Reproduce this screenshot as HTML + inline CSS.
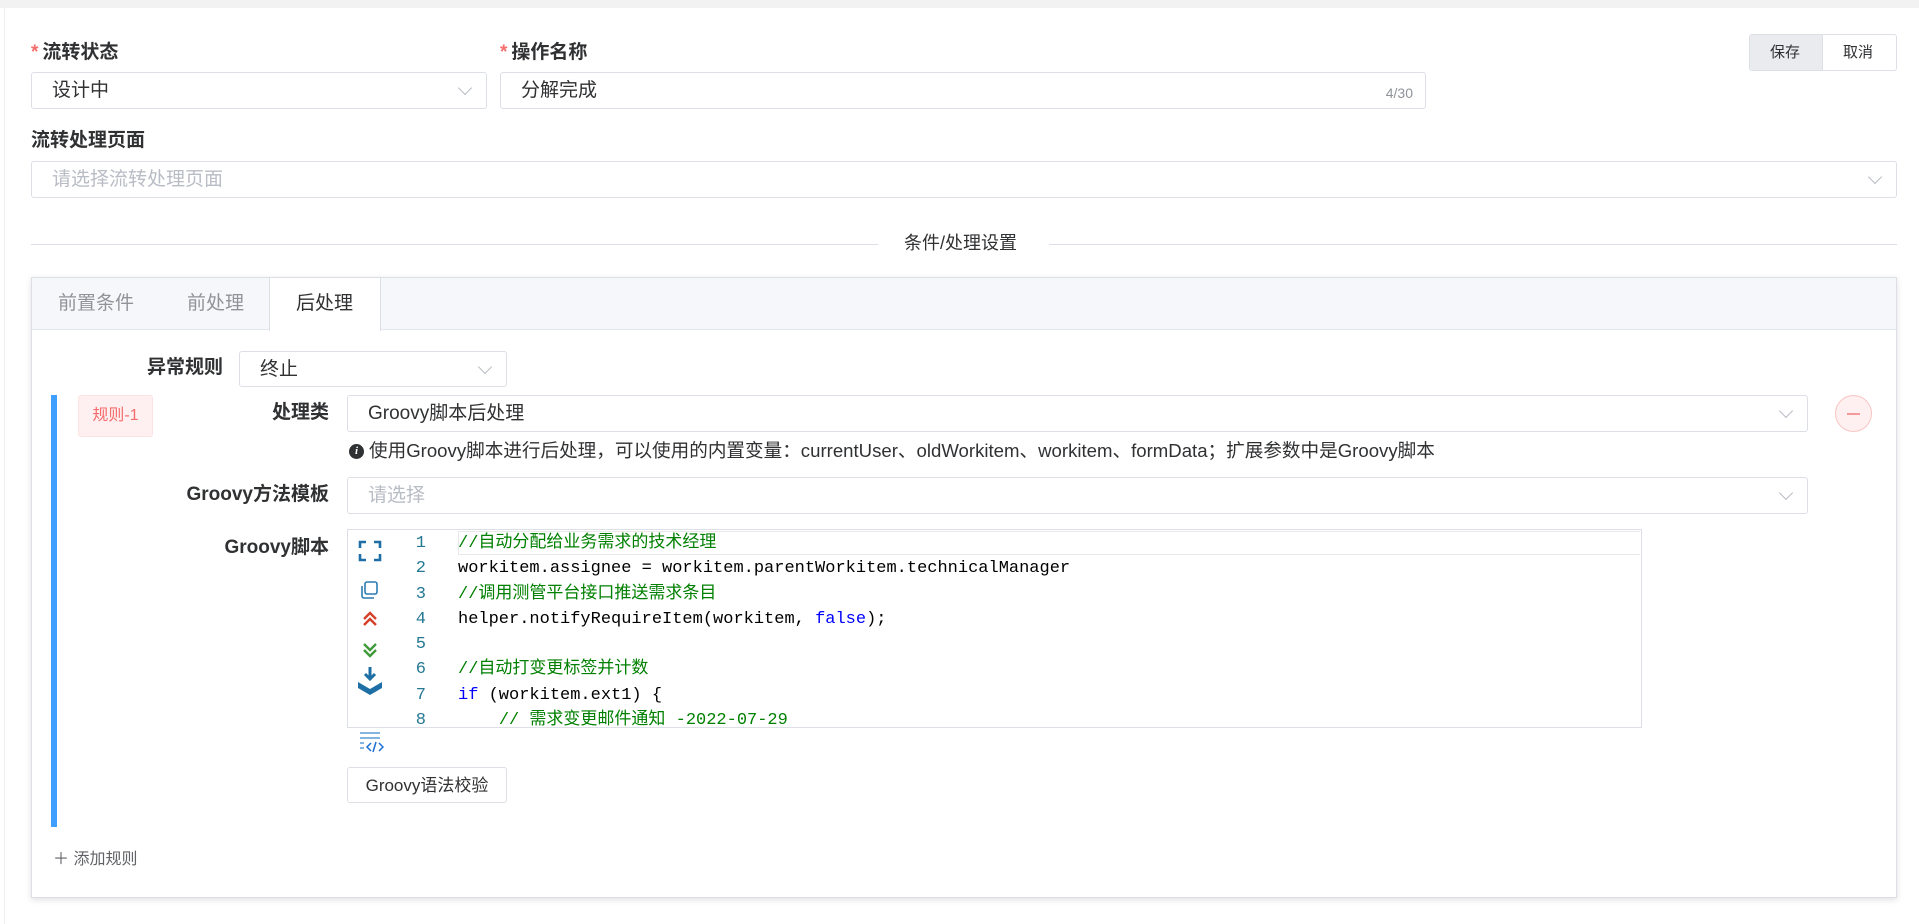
<!DOCTYPE html>
<html><head><meta charset="utf-8"><style>
*{box-sizing:border-box;margin:0;padding:0}
body{width:1919px;height:924px;background:#fff;font-family:"Liberation Sans","Noto Sans CJK SC",sans-serif;color:#303133;position:relative;overflow:hidden;font-size:19px}
.a{position:absolute}
.box{position:absolute;border:1px solid #dcdfe6;border-radius:3px;background:#fff}
.lbl{position:absolute;font-weight:bold;font-size:19px;color:#303133;line-height:22px}
.rl{text-align:right;width:300px}
.star{color:#f56c6c;margin-right:4px}
.chev{position:absolute;width:10px;height:10px;border-right:1.5px solid #b8bcc4;border-bottom:1.5px solid #b8bcc4;transform:rotate(45deg)}
.txt{position:absolute;line-height:22px}
.ph{color:#b8bcc4}
.code{position:absolute;left:458px;font-family:"Liberation Mono","Noto Sans CJK SC",monospace;font-size:17px;line-height:25.3px;white-space:pre;color:#000}
.ln{position:absolute;left:400px;width:26px;text-align:right;font-family:"Liberation Mono",monospace;font-size:17px;line-height:25.3px;color:#237893}
.cm{color:#008000}.kw{color:#0000ff}
</style></head><body>
<div class="a" style="left:0;top:0;width:1919px;height:8px;background:#f2f2f2"></div>
<div class="a" style="left:4px;top:8px;width:1px;height:916px;background:#eee"></div>

<div class="lbl" style="left:31px;top:42px"><span class="star">*</span>流转状态</div>
<div class="box" style="left:31px;top:72px;width:456px;height:37px"><div class="txt" style="left:20px;top:7px">设计中</div><div class="chev" style="right:16px;top:10px"></div></div>
<div class="lbl" style="left:500px;top:42px"><span class="star">*</span>操作名称</div>
<div class="box" style="left:500px;top:72px;width:926px;height:37px"><div class="txt" style="left:20px;top:7px">分解完成</div><div class="txt" style="right:12px;top:9px;font-size:14px;color:#909399">4/30</div></div>

<div class="box" style="left:1749px;top:34px;width:148px;height:37px;overflow:hidden"><div class="a" style="left:0;top:0;width:73px;height:37px;background:#e9ebef;border-right:1px solid #dcdfe6"></div><div class="txt" style="left:20px;top:7px;font-size:15px">保存</div><div class="txt" style="left:93px;top:7px;font-size:15px">取消</div></div>

<div class="lbl" style="left:31px;top:130px">流转处理页面</div>
<div class="box" style="left:31px;top:161px;width:1866px;height:37px"><div class="txt ph" style="left:20px;top:7px">请选择流转处理页面</div><div class="chev" style="right:16px;top:10px"></div></div>

<div class="a" style="left:31px;top:244px;width:847px;height:1px;background:#dcdfe6"></div>
<div class="a" style="left:1049px;top:244px;width:848px;height:1px;background:#dcdfe6"></div>
<div class="txt" style="left:904px;top:232px;font-size:18px">条件/处理设置</div>

<div class="a" style="left:31px;top:277px;width:1866px;height:621px;border:1px solid #dcdfe6;box-shadow:0 2px 6px rgba(0,0,0,.12);background:#fff"></div>
<div class="a" style="left:32px;top:278px;width:1864px;height:52px;background:#f5f7fa;border-bottom:1px solid #e4e7ed"></div>
<div class="a" style="left:269px;top:278px;width:112px;height:53px;background:#fff;border-left:1px solid #dcdfe6;border-right:1px solid #dcdfe6"></div>
<div class="txt" style="left:58px;top:293px;color:#909399">前置条件</div>
<div class="txt" style="left:187px;top:293px;color:#909399">前处理</div>
<div class="txt" style="left:296px;top:293px">后处理</div>

<div class="lbl rl" style="left:-77px;top:357px">异常规则</div>
<div class="box" style="left:239px;top:351px;width:268px;height:36px"><div class="txt" style="left:20px;top:7px">终止</div><div class="chev" style="right:16px;top:10px"></div></div>

<div class="a" style="left:51px;top:395px;width:6px;height:432px;background:#409eff"></div>
<div class="a" style="left:78px;top:395px;width:75px;height:42px;background:#fef0f0;border:1px solid #fde2e2;border-radius:3px;color:#f56c6c;font-size:16px;line-height:40px;text-align:center">规则-1</div>

<div class="lbl rl" style="left:29px;top:402px">处理类</div>
<div class="box" style="left:347px;top:395px;width:1461px;height:37px"><div class="txt" style="left:20px;top:7px">Groovy脚本后处理</div><div class="chev" style="right:16px;top:10px"></div></div>
<div class="a" style="left:1835px;top:395px;width:37px;height:37px;border:1px solid #fbc4c4;border-radius:50%;background:#fef0f0"><div class="a" style="left:11px;top:17px;width:13px;height:2px;background:#f89898"></div></div>

<div class="a" style="left:349px;top:444px;width:15px;height:15px;border-radius:50%;background:#303133;color:#fff;font-size:11px;font-weight:bold;font-style:italic;text-align:center;line-height:15px;font-family:'Liberation Serif',serif">i</div>
<div class="txt" style="left:369px;top:440px;font-size:18.6px">使用Groovy脚本进行后处理，可以使用的内置变量：currentUser、oldWorkitem、workitem、formData；扩展参数中是Groovy脚本</div>

<div class="lbl rl" style="left:29px;top:484px">Groovy方法模板</div>
<div class="box" style="left:347px;top:477px;width:1461px;height:37px"><div class="txt ph" style="left:20px;top:7px">请选择</div><div class="chev" style="right:16px;top:10px"></div></div>

<div class="lbl rl" style="left:29px;top:537px">Groovy脚本</div>
<div class="a" style="left:347px;top:529px;width:1295px;height:199px;border:1px solid #dcdfe6"></div>
<div class="a" style="left:458px;top:531px;width:1182px;height:24px;border:1px solid #e8e8e8;border-right:none"></div>

<svg class="a" style="left:357px;top:539px" width="26" height="160" viewBox="0 0 26 160">
<g fill="none" stroke="#1d6fa5" stroke-width="2.6">
<path d="M3 9V3h6M17 3h6v6M3 15v6h6M23 15v6h-6"/>
</g>
<g fill="none" stroke="#2c7cb0" stroke-width="1.6">
<rect x="8" y="43" width="12" height="12" rx="2"/><path d="M5 47v10a2 2 0 0 0 2 2h10"/>
</g>
<path d="M7 80l6-6 6 6M7 86l6-6 6 6" fill="none" stroke="#d6402a" stroke-width="2.4"/>
<path d="M7 105l6 6 6-6M7 111l6 6 6-6" fill="none" stroke="#3f9a3a" stroke-width="2.4"/>
<path d="M13 128v12M8 135l5 5 5-5" fill="none" stroke="#1d6fa5" stroke-width="3"/>
<path d="M1 143l12 7 12-7v6l-12 7-12-7z" fill="#1d6fa5"/>
</svg>
<svg class="a" style="left:358px;top:731px" width="26" height="24" viewBox="0 0 26 24">
<path d="M2 2h20M2 7h20M2 12h4M2 17h4" stroke="#5b9bd5" stroke-width="1.5" fill="none"/>
<path d="M13 12l-4 4 4 4M21 12l4 4-4 4M18 11l-3 10" stroke="#1d6fd5" stroke-width="1.5" fill="none"/>
</svg>

<div class="ln" style="top:531px">1<br>2<br>3<br>4<br>5<br>6<br>7<br>8</div>
<div class="code" style="top:531px;height:196px;overflow:hidden"><span class="cm">//自动分配给业务需求的技术经理</span>
workitem.assignee = workitem.parentWorkitem.technicalManager
<span class="cm">//调用测管平台接口推送需求条目</span>
helper.notifyRequireItem(workitem, <span class="kw">false</span>);

<span class="cm">//自动打变更标签并计数</span>
<span class="kw">if</span> (workitem.ext1) {
    <span class="cm">// 需求变更邮件通知 -2022-07-29</span></div>

<div class="box" style="left:347px;top:767px;width:160px;height:36px"><div class="txt" style="left:0;width:158px;text-align:center;top:7px;font-size:17px">Groovy语法校验</div></div>

<div class="txt" style="left:53px;top:849px;font-size:16px;color:#606266">＋ 添加规则</div>
</body></html>
